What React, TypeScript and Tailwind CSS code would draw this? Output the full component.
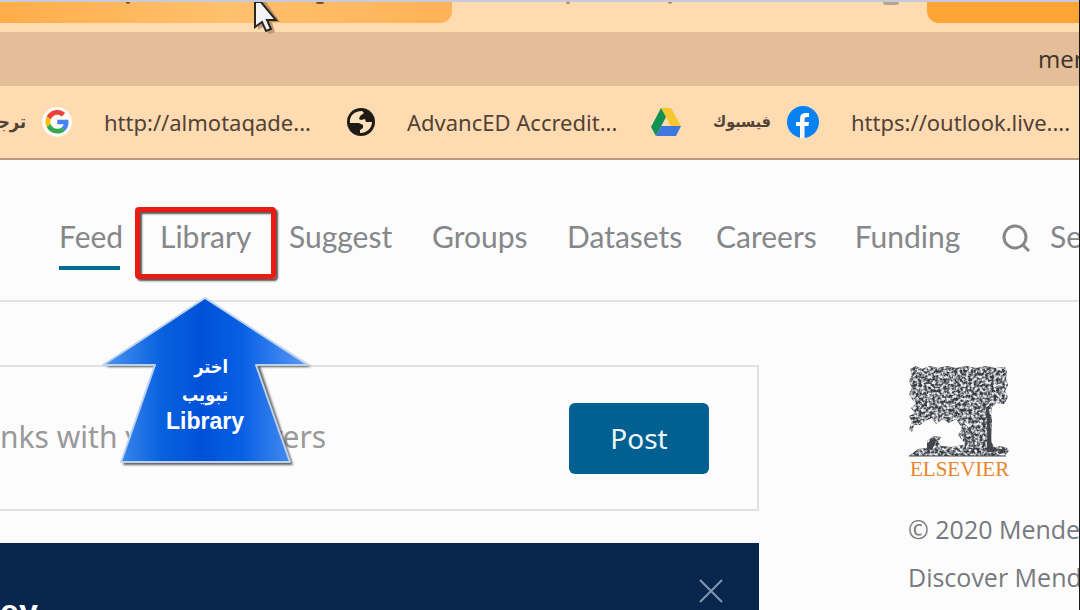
import React, { useId } from "react";

const nav = [
  { label: "Feed", width: "w-[61px]", gap: "" },
  { label: "Library", width: "w-[89px]", gap: "ml-[40px]" },
  { label: "Suggest", width: "w-[103px]", gap: "ml-[40px]" },
  { label: "Groups", width: "w-[95px]", gap: "ml-[40px]" },
  { label: "Datasets", width: "w-[109px]", gap: "ml-[40px]" },
  { label: "Careers", width: "w-[97px]", gap: "ml-[40px]" },
  { label: "Funding", width: "w-[109px]", gap: "ml-[40px]" },
];

function GoogleIcon() {
  return (
    <svg viewBox="0 0 30 30" className="h-[30px] w-[30px] shrink-0" aria-hidden="true">
      <circle cx="15" cy="15" r="15" fill="#fffaf5" />
      <g transform="translate(3.5 3) scale(0.49)">
        <path fill="#EA4335" d="M24 9.5c3.54 0 6.71 1.22 9.21 3.6l6.85-6.85C35.9 2.38 30.47 0 24 0 14.62 0 6.51 5.38 2.56 13.22l7.98 6.19C12.43 13.72 17.74 9.5 24 9.5z" />
        <path fill="#4285F4" d="M46.98 24.55c0-1.57-.15-3.09-.38-4.55H24v9.02h12.94c-.58 2.96-2.26 5.48-4.78 7.18l7.73 6c4.51-4.18 7.09-10.36 7.09-17.65z" />
        <path fill="#FBBC05" d="M10.53 28.59c-.48-1.45-.76-2.99-.76-4.59s.27-3.14.76-4.59l-7.98-6.19C.92 16.46 0 20.12 0 24c0 3.88.92 7.54 2.56 10.78l7.97-6.19z" />
        <path fill="#34A853" d="M24 48c6.48 0 11.93-2.13 15.89-5.81l-7.73-6c-2.15 1.45-4.92 2.3-8.16 2.3-6.26 0-11.57-4.22-13.47-9.91l-7.98 6.19C6.51 42.62 14.62 48 24 48z" />
      </g>
    </svg>
  );
}

function GlobeIcon() {
  return (
    <svg viewBox="0 0 28 28" className="h-[28px] w-[28px] shrink-0" aria-hidden="true">
      <circle cx="14" cy="14" r="14" fill="#1f1a14" />
      <path d="M3 15 C2 8 7 3 15 3 L17 5 L13 8 L12 11 L14 12 L18 11 L19 14 L25 14 C25 20 20 25 13 25 L13 22 L16 20 L16 17 L12 15 Z" fill="#ffe1bd" />
    </svg>
  );
}

function DriveIcon() {
  return (
    <svg viewBox="0 0 30 28" className="h-[28px] w-[30px] shrink-0" aria-hidden="true">
      <path d="M10 0 H20 L30 18 H20 Z" fill="#f8c72f" />
      <path d="M10 0 L15 9 L5 28 L0 19 Z" fill="#109252" />
      <path d="M10 18 H30 L25 28 H5 Z" fill="#3e78df" />
    </svg>
  );
}

function FacebookIcon() {
  return (
    <svg viewBox="0 0 32 32" className="h-[32px] w-[32px] shrink-0" aria-hidden="true">
      <circle cx="16" cy="16" r="16" fill="#0882f3" />
      <path d="M13 32 V20 H9 V16 H13 V13 C13 9 15 7 19 7 H22 V11 H20 C18 11 17.500 12 17.500 14 V16 H22 L21.500 20 H17.500 V32 Z" fill="#fff8f0" />
    </svg>
  );
}

function ElsevierTree() {
  const id = useId();
  return (
    <svg viewBox="0 0 102 92" className="h-[92px] w-[102px]" aria-hidden="true">
      <defs>
        <filter id={id} x="0" y="0" width="100%" height="100%" colorInterpolationFilters="sRGB">
          <feTurbulence type="fractalNoise" baseFrequency="0.36" numOctaves="2" seed="8" />
          <feColorMatrix values="0 0 0 0 0.93  0 0 0 0 0.93  0 0 0 0 0.94  3 0 0 0 -1.050" />
          <feComposite in2="SourceGraphic" operator="in" result="speckles" />
          <feMerge>
            <feMergeNode in="SourceGraphic" />
            <feMergeNode in="speckles" />
          </feMerge>
        </filter>
      </defs>
      <g filter={`url(#${id})`} fill="#363a41">
        <path d="M2 4 L8 1 L14 4 L22 1 L30 3 L39 1 L48 3 L58 1 L68 3 L78 1 L87 3 L97 2 L99 7 L98 14 L100 20 L97 26 L100 32 L96 39 L88 38 L84 42 L83 49 L78 48 L73 54 L68 56 L63 60 L57 57 L52 60 L48 54 L41 58 L35 54 L28 59 L24 53 L17 56 L12 60 L6 60 L4 67 L1 64 L4 57 L1 51 L7 48 L3 43 L8 39 L4 34 L1 29 L4 23 L1 16 L4 10 Z" />
        <path d="M50 54 L56 58 L61 63 L64 56 L71 49 L78 42 L82 45 L84 54 L83 77 L88 84 L79 91 L54 91 L57 78 L50 70 L54 64 Z" />
        <path d="M1 91 L10 84 L19 83 L19 76 L26 71 L33 72 L30 77 L33 81 L44 82 L54 80 L64 84 L73 81 L83 84 L92 81 L99 83 L101 86 L96 91 Z" />
      </g>
      <path d="M78 42 Q83 47 82 62 L83 78 Q84 83 89 86 L79 87 Q81 63 78 42 M19 84 Q20 75 27 73 Q28 79 23 85 M86 84 L95 86 L99 84 M1 91 H98" fill="#414549" stroke="#414549" strokeWidth="1" />
      <path d="M54 62 Q60 70 57 84 M60 63 Q67 71 66 85" fill="none" stroke="#4c5056" strokeWidth="1.500" />
    </svg>
  );
}

function Arrow() {
  const id = useId();
  return (
    <svg viewBox="0 0 216 174" className="absolute inset-0 h-full w-full" aria-hidden="true">
      <defs>
        <linearGradient id={id}>
          <stop offset="0" stopColor="#4f94f2" />
          <stop offset=".28" stopColor="#0a62df" />
          <stop offset=".48" stopColor="#0051d8" />
          <stop offset=".68" stopColor="#0860e4" />
          <stop offset="1" stopColor="#5b9af6" />
        </linearGradient>
        <filter id={`${id}-soft`}><feGaussianBlur stdDeviation="1" /></filter>
      </defs>
      <path d="M107 6 L210 71 H159 L192 169 H22 L56 71 H5 Z" fill="#444" opacity=".85" filter={`url(#${id}-soft)`} />
      <path d="M104 2 L207 69 H155 L189 166 H20 L54 69 H2 Z" fill={`url(#${id})`} stroke="#bdd3ed" strokeWidth="2" strokeLinejoin="round" />
    </svg>
  );
}

export default function App() {
  return (
    <div className="relative flex h-screen flex-col overflow-hidden border-r border-[#171717] bg-[#fcfcfc] font-['Open_Sans','Noto_Sans',sans-serif] text-[#85878a]">
      <header className="shrink-0">
        <div className="flex h-8 items-start border-t-2 border-[#c6cadb] bg-[#ffdbb2]">
          <div className="flex h-[21px] w-[452px] items-start rounded-br-xl bg-linear-to-r from-[#ffad48] via-[#ffc06d] to-[#ffb257]">
            <span className="ml-[126px] h-0.5 w-1 rounded-b bg-[#7a5426]" />
            <span className="ml-[186px] h-0.5 w-2 rounded-b bg-[#7a5426]" />
          </div>
          <div className="flex flex-1 items-start">
            <span className="ml-[114px] h-0.5 w-1 rounded-b bg-[#a88a6a]" />
            <span className="ml-[98px] h-0.5 w-1 rounded-b bg-[#a88a6a]" />
            <span className="ml-[211px] h-[3px] w-4 rounded-b-lg bg-[#b9a48e]" />
          </div>
          <div className="h-[21px] w-[152px] rounded-bl-xl bg-[#ffa535]" />
        </div>
        <div className="flex h-[54px] items-center justify-end bg-[#e4bd99] text-2xl text-[#3d332a]">
          <div className="w-[41px] overflow-hidden whitespace-nowrap">mendeley.com</div>
        </div>
        <nav aria-label="Bookmarks" className="flex h-[74px] items-center overflow-hidden border-b-2 border-[#bd9880] bg-[#ffdbb2] font-['Noto_Sans',sans-serif] text-[22px] whitespace-nowrap text-[#514236]">
          <a href="#translate" className="flex shrink-0 items-center">
            <span dir="rtl" className="flex w-[26px] justify-start overflow-hidden font-['DejaVu_Sans_Condensed','DejaVu_Sans',sans-serif] text-lg font-bold">ترجمة</span>
            <span className="ml-4"><GoogleIcon /></span>
          </a>
          <a href="#almotaqadem" className="ml-8 w-[211px] shrink-0">http://almotaqade...</a>
          <a href="#accreditation" className="ml-8 flex shrink-0 items-center"><GlobeIcon /><span className="ml-8 w-[217px]">AdvancED Accredit...</span></a>
          <a href="#facebook" className="ml-[27px] flex shrink-0 items-center"><DriveIcon /><span dir="rtl" className="ml-8 w-[58px] font-['DejaVu_Sans_Condensed','DejaVu_Sans',sans-serif] text-base font-bold">فيسبوك</span><span className="ml-4"><FacebookIcon /></span></a>
          <a href="#outlook" className="ml-8 shrink-0">https://outlook.live....</a>
        </nav>
        <nav aria-label="Main navigation" className="flex h-[142px] items-center overflow-hidden border-b-2 border-[#e2e3e2] pt-7 pl-[59px] font-['Lato',sans-serif] text-3xl whitespace-nowrap">
          {nav.map((item, index) => (
            <a href={`#${item.label.toLowerCase()}`} key={item.label} className={`${item.width} ${item.gap} shrink-0 border-b-4 pb-3 text-center ${index === 0 ? "border-[#006d91]" : "border-transparent"}`}>{item.label}</a>
          ))}
          <a href="#search" className="ml-[40px] flex shrink-0 items-center pb-4">
            <svg viewBox="0 0 28 28" className="mt-1 mr-5 h-7 w-7" fill="none" stroke="currentColor" strokeWidth="3" aria-hidden="true"><circle cx="13" cy="13" r="11" /><path d="m20 20 7 7" /></svg>Search
          </a>
        </nav>
      </header>

      <main className="flex min-h-0 flex-1 pt-[63px]">
        <div className="w-[759px] shrink-0">
          <form className="flex h-[146px] items-center border-2 border-l-0 border-[#e1e2e1]" onSubmit={(event) => event.preventDefault()}>
            <label className="min-w-0 flex-1 pb-1">
              <span className="sr-only">Create a post</span>
              <input className="w-full bg-transparent font-['Noto_Sans',sans-serif] text-[30px] text-[#777] outline-none placeholder:text-[#999]" placeholder="nks with your followers" />
            </label>
            <button className="mr-12 h-[71px] w-[140px] rounded-md bg-[#006091] font-['Noto_Sans',sans-serif] text-[28px] text-[#eef8fa]">Post</button>
          </form>
          <section className="mt-8 flex h-[100px] items-start justify-between bg-[#08264d] text-white">
            <h2 className="pt-12 font-['Liberation_Sans',sans-serif] text-[34px] leading-10 font-bold">ey</h2>
            <button aria-label="Close" className="mt-9 mr-9 h-6 w-6 text-[#8496af]"><svg viewBox="0 0 24 24" fill="none" stroke="currentColor" strokeWidth="2"><path d="m1 1 22 22M23 1 1 23" /></svg></button>
          </section>
        </div>
        <aside className="ml-[149px] shrink-0 whitespace-nowrap">
          <ElsevierTree />
          <div className="pl-0.5 font-['Liberation_Serif',serif] text-[21px] leading-6 text-[#e8842a]">ELSEVIER</div>
          <div className="mt-8 flex flex-col gap-4 text-[25px] leading-8 text-[#77797c]"><span>© 2020 Mendeley Ltd.</span><a href="#discover">Discover Mendeley</a></div>
        </aside>
      </main>

      <div className="pointer-events-none absolute top-[207px] left-[135px] h-[72px] w-[141px] rounded-sm border-[5px] border-[#e91c11] shadow-[2px_2px_2px_#555,inset_2px_2px_2px_#555]" />
      <div className="pointer-events-none absolute top-[296px] left-[101px] h-[174px] w-[216px]">
        <Arrow />
        <div className="relative flex h-full flex-col items-center pt-[57px] pr-2 text-white">
          <p dir="rtl" className="text-start font-['DejaVu_Sans_Condensed','DejaVu_Sans',sans-serif] text-lg leading-7 font-bold">اختر<br />تبويب</p>
          <p className="font-['Liberation_Sans',sans-serif] text-[23px] leading-6 font-bold">Library</p>
        </div>
      </div>
      <svg viewBox="0 0 32 36" className="pointer-events-none absolute top-0.5 left-[254px] h-9 w-8" aria-hidden="true"><path d="M4 0 V28 L10 24 L15 32 L21 30 L18 20 H26 L12 0 Z" fill="#997451" opacity=".6" /><path d="M1 0 V25 L8 20 L12 29 L17 27 L13 18 H22 L7 0 Z" fill="#f3f3f3" stroke="#292522" strokeWidth="2" /></svg>
    </div>
  );
}
